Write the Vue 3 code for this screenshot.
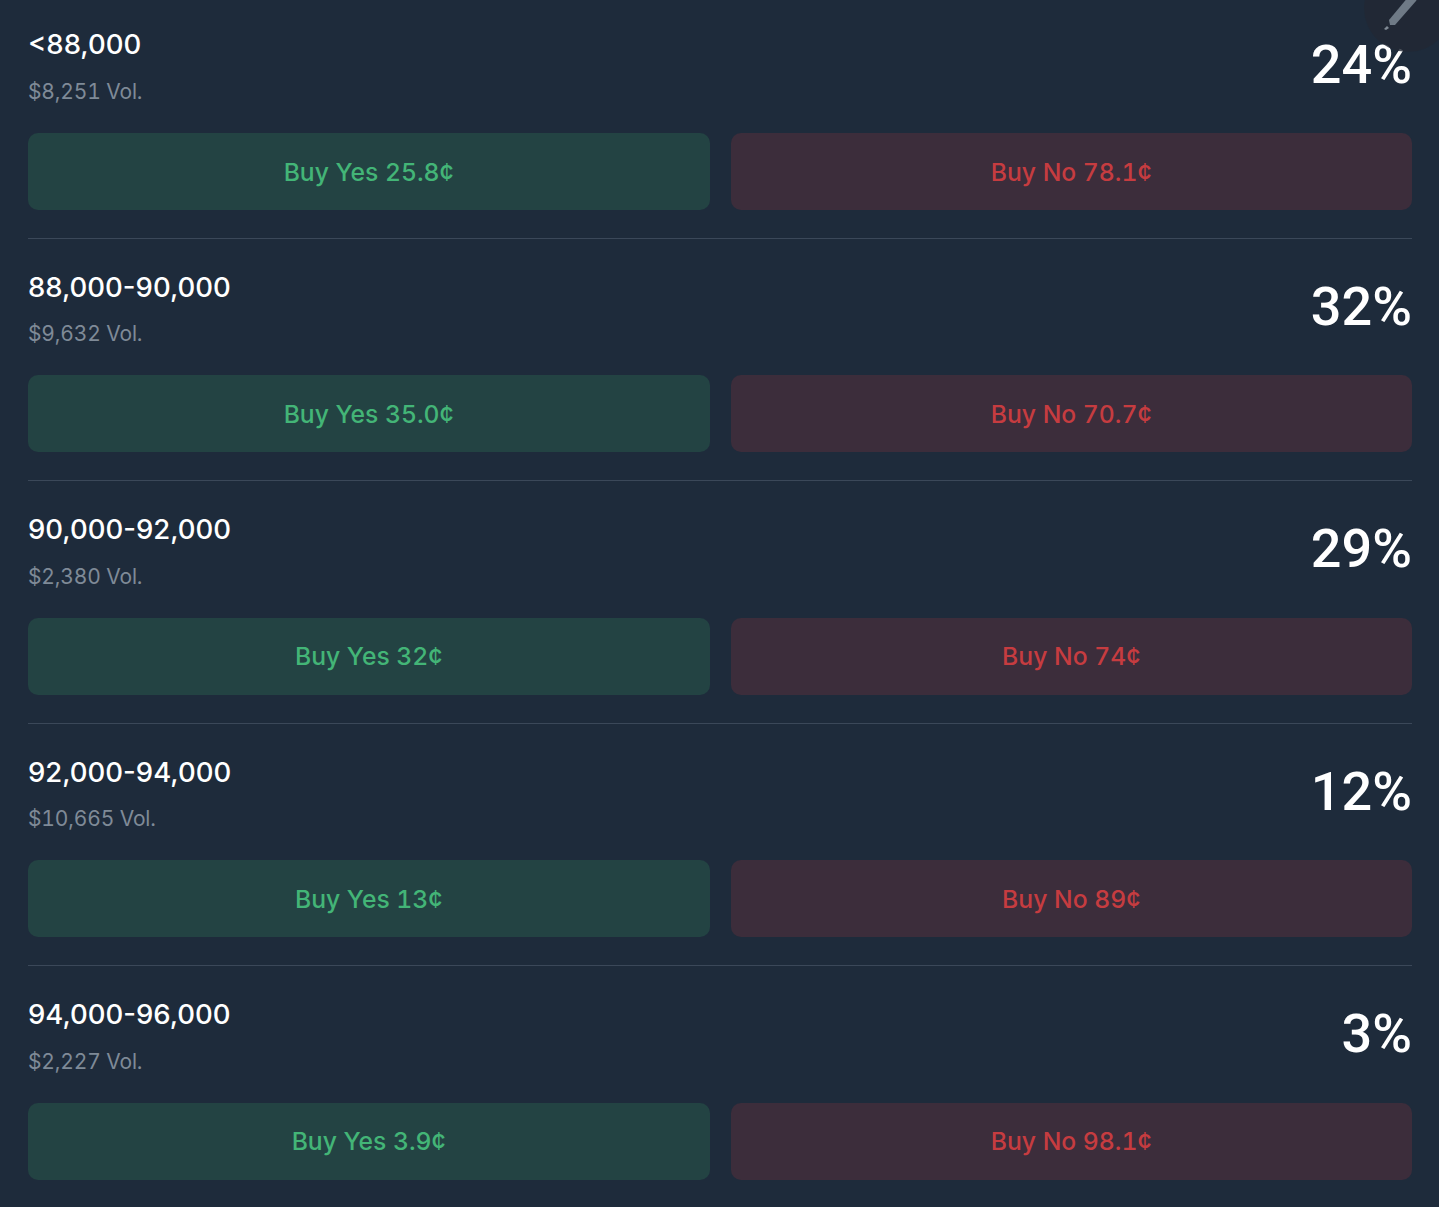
<script setup>
const rows = [
  { label: '<88,000', vol: '$8,251 Vol.', pct: '24%', yes: '25.8', no: '78.1' },
  { label: '88,000-90,000', vol: '$9,632 Vol.', pct: '32%', yes: '35.0', no: '70.7' },
  { label: '90,000-92,000', vol: '$2,380 Vol.', pct: '29%', yes: '32', no: '74' },
  { label: '92,000-94,000', vol: '$10,665 Vol.', pct: '12%', yes: '13', no: '89' },
  { label: '94,000-96,000', vol: '$2,227 Vol.', pct: '3%', yes: '3.9', no: '98.1' },
]
</script>

<template>
  <main class="page">
    <section v-for="r in rows" :key="r.label" class="row">
      <div class="head">
        <div class="info">
          <div class="label">{{ r.label }}</div>
          <div class="vol">{{ r.vol }}</div>
        </div>
        <div class="pct">{{ r.pct }}</div>
      </div>
      <div class="actions">
        <button class="btn yes">Buy Yes {{ r.yes }}¢</button>
        <button class="btn no">Buy No {{ r.no }}¢</button>
      </div>
    </section>
    <div class="fab">
      <svg class="pen" viewBox="0 0 40 40" width="40" height="40">
        <path d="M7 27 L27 3 Q30 0 33 2 Q36 5 34 8 L13 32 L8 32 Z" fill="#6f7a86" />
        <path d="M2 36 L5 33 L7 35 L4 37 Z" fill="#808a95" />
      </svg>
    </div>
  </main>
</template>

<style scoped>
.page {
  position: relative;
  width: 1439px;
  height: 1207px;
  overflow: hidden;
  box-sizing: border-box;
  padding: 0 27px 0 28px;
  background: #1e2b3b;
  font-family: Inter, "Liberation Sans", sans-serif;
}
.row {
  box-sizing: border-box;
  height: 242.5px;
  padding-top: 28px;
  border-bottom: 1px solid #3b4859;
}
.row .head {
  height: 108.2px;
}
.row:first-child {
  height: 238.9px;
  padding-top: 24px;
}
.row:first-child .head {
  height: 109.2px;
}
.row:first-child .vol {
  margin-top: 12px;
}
.row:last-child {
  border-bottom: 0;
}
.head {
  display: flex;
  justify-content: space-between;
  align-items: flex-start;
}
.label {
  color: #fff;
  font-size: 27.5px;
  line-height: 40px;
  font-weight: 500;
}
.vol {
  margin-top: 11.5px;
  color: #7f8a97;
  font-size: 21px;
  line-height: 32px;
  letter-spacing: -0.15px;
  font-variant-numeric: tabular-nums;
}
.pct {
  color: #fff;
  font-family: Roboto, sans-serif;
  font-size: 54px;
  line-height: 64px;
  font-weight: 500;
  margin-top: 8px;
}
.row:first-child .pct {
  margin-top: 9px;
}
.actions {
  display: grid;
  grid-template-columns: 1fr 1fr;
  gap: 21px;
}
.btn {
  height: 77px;
  border: 0;
  border-radius: 10px;
  font: inherit;
  font-size: 24.7px;
  font-weight: 500;
  font-variant-numeric: tabular-nums;
}
.yes {
  background: #234343;
  color: #43b577;
}
.no {
  background: #3c2d3b;
  color: #c63c40;
}
.fab {
  position: absolute;
  left: 1364px;
  top: -36px;
  width: 88px;
  height: 88px;
  border-radius: 50%;
  background: rgba(34, 40, 52, 0.8);
}
.pen {
  position: absolute;
  left: 18px;
  top: 29px;
}
</style>
